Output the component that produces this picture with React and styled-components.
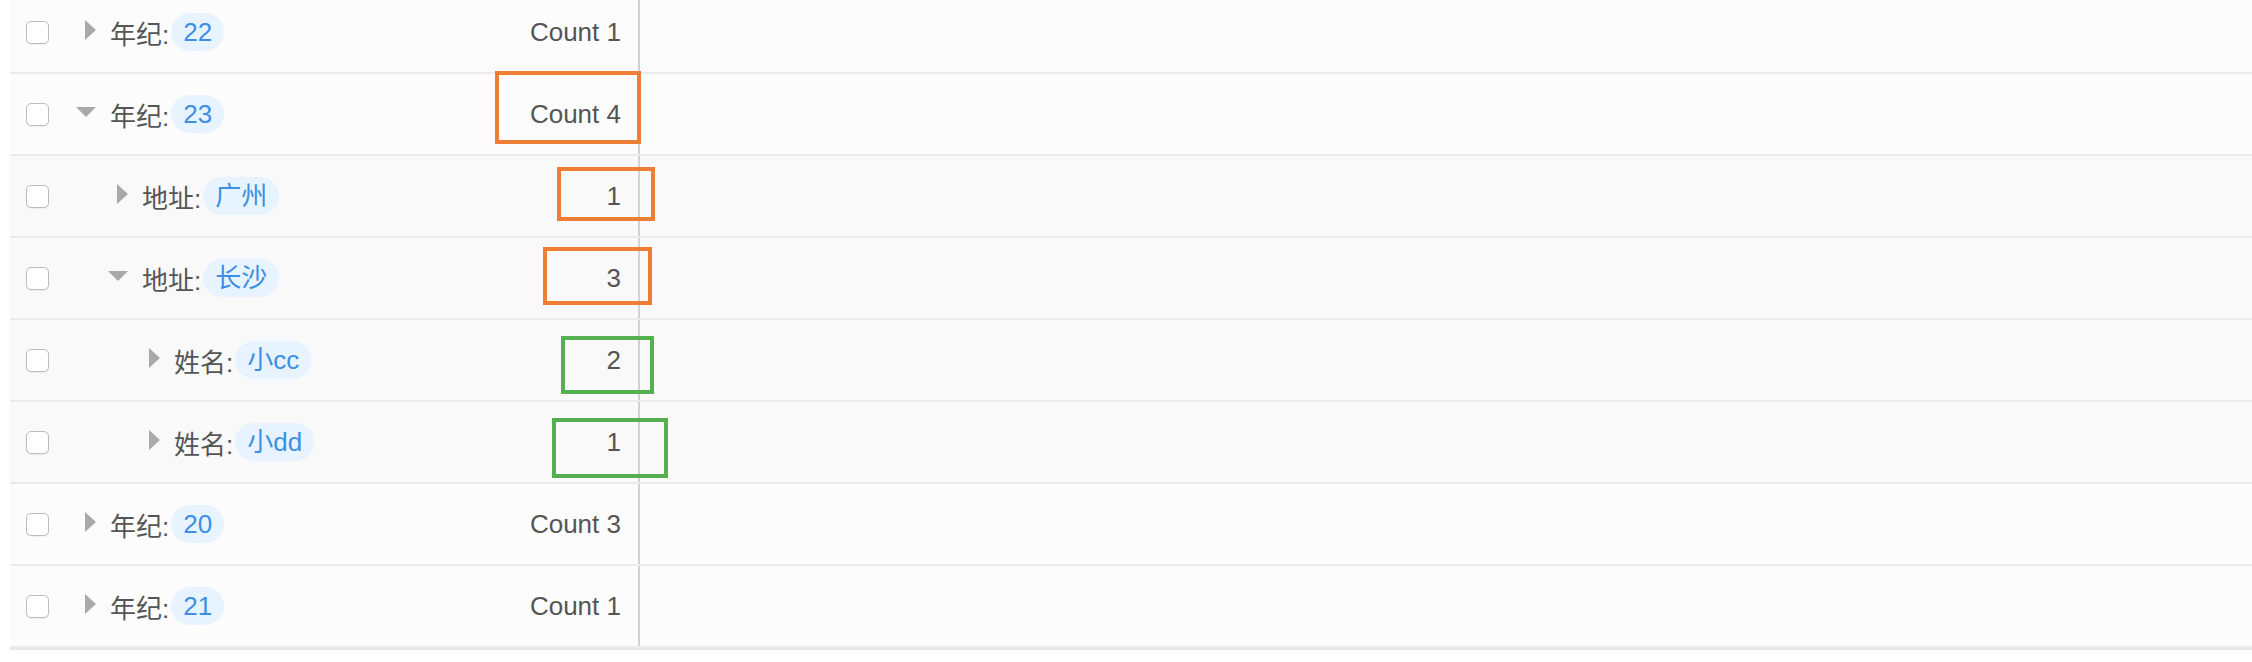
import styled, { createGlobalStyle } from "styled-components";

const GlobalStyle = createGlobalStyle`
  html, body {
    margin: 0;
    padding: 0;
    background: #fff;
  }
  body {
    font-family: "Liberation Sans", "Noto Sans CJK SC", sans-serif;
    color: #555;
  }
`

const Viewport = styled.div`
  height: 662px;
  overflow: hidden;
  background: #fff;
`

const Table = styled.div`
  margin: -8px 0 0 10px;
  border-bottom: 2px solid #e8e8e8;
`

const Row = styled.div`
  position: relative;
  display: grid;
  grid-template-columns: 630px 1fr;
  height: 80px;
  border-bottom: 2px solid #ebebeb;
  background: ${p => (p.$level > 0 ? "#f9f9f9" : "#fcfcfc")};
`

const GroupCell = styled.div`
  display: flex;
  align-items: center;
  padding: 0 17px 0 16px;
  border-right: 2px solid #d2d2d2;
`

const Checkbox = styled.span`
  flex: none;
  width: 21px;
  height: 21px;
  border: 1.5px solid #bdbdbd;
  border-radius: 5px;
  background: #fff;
  box-shadow: 0 1px 1px rgba(0, 0, 0, 0.06);
`

const Caret = styled.svg`
  flex: none;
  width: 20px;
  height: 24px;
  margin-left: ${p => 27 + p.$level * 32}px;
  margin-right: 14px;
  fill: #a9a9a9;
`

const Label = styled.span`
  font-size: 26px;
  color: #555;
  white-space: nowrap;
`

const Pill = styled.span`
  margin-left: 2px;
  padding: 0 12px;
  height: 38px;
  line-height: 38px;
  border-radius: 19px;
  background: #e7f3fe;
  color: #3d8fe4;
  font-size: 26px;
  white-space: nowrap;
`

const Count = styled.span`
  margin-left: auto;
  font-size: 26px;
  color: #555;
  white-space: nowrap;
`

const EmptyCell = styled.div``

const Mark = styled.div`
  position: absolute;
  left: ${p => p.$x - 10}px;
  top: ${p => p.$y}px;
  width: ${p => p.$w}px;
  height: ${p => p.$h}px;
  box-sizing: border-box;
  border: 4px solid ${p => (p.$green ? "#55b050" : "#ed7f35")};
  pointer-events: none;
`

const rows = [
  { level: 0, key: "年纪", value: "22", count: "Count 1" },
  { level: 0, key: "年纪", value: "23", count: "Count 4", open: true, mark: { x: 495, y: -3, w: 146, h: 73 } },
  { level: 1, key: "地址", value: "广州", count: "1", mark: { x: 557, y: 11, w: 98, h: 54 } },
  { level: 1, key: "地址", value: "长沙", count: "3", open: true, mark: { x: 543, y: 9, w: 109, h: 58 } },
  { level: 2, key: "姓名", value: "小cc", count: "2", mark: { x: 561, y: 16, w: 93, h: 58, green: true } },
  { level: 2, key: "姓名", value: "小dd", count: "1", mark: { x: 552, y: 16, w: 116, h: 60, green: true } },
  { level: 0, key: "年纪", value: "20", count: "Count 3" },
  { level: 0, key: "年纪", value: "21", count: "Count 1" },
]

const CaretIcon = ({ open, level }) => (
  <Caret $level={level} viewBox="0 0 20 24">
    {open ? <polygon points="0,5 20,5 10,15" /> : <polygon points="9,0 20,10 9,20" />}
  </Caret>
)

const App = () => {
  return (
    <>
      <GlobalStyle />
      <Viewport>
        <Table>
          {rows.map((row, index) => (
            <Row key={index} $level={row.level}>
              <GroupCell>
                <Checkbox />
                <CaretIcon open={row.open} level={row.level} />
                <Label>{row.key}:</Label>
                <Pill>{row.value}</Pill>
                <Count>{row.count}</Count>
              </GroupCell>
              <EmptyCell />
              {row.mark ? (
                <Mark $x={row.mark.x} $y={row.mark.y} $w={row.mark.w} $h={row.mark.h} $green={row.mark.green} />
              ) : null}
            </Row>
          ))}
        </Table>
      </Viewport>
    </>
  )
}

export default App
